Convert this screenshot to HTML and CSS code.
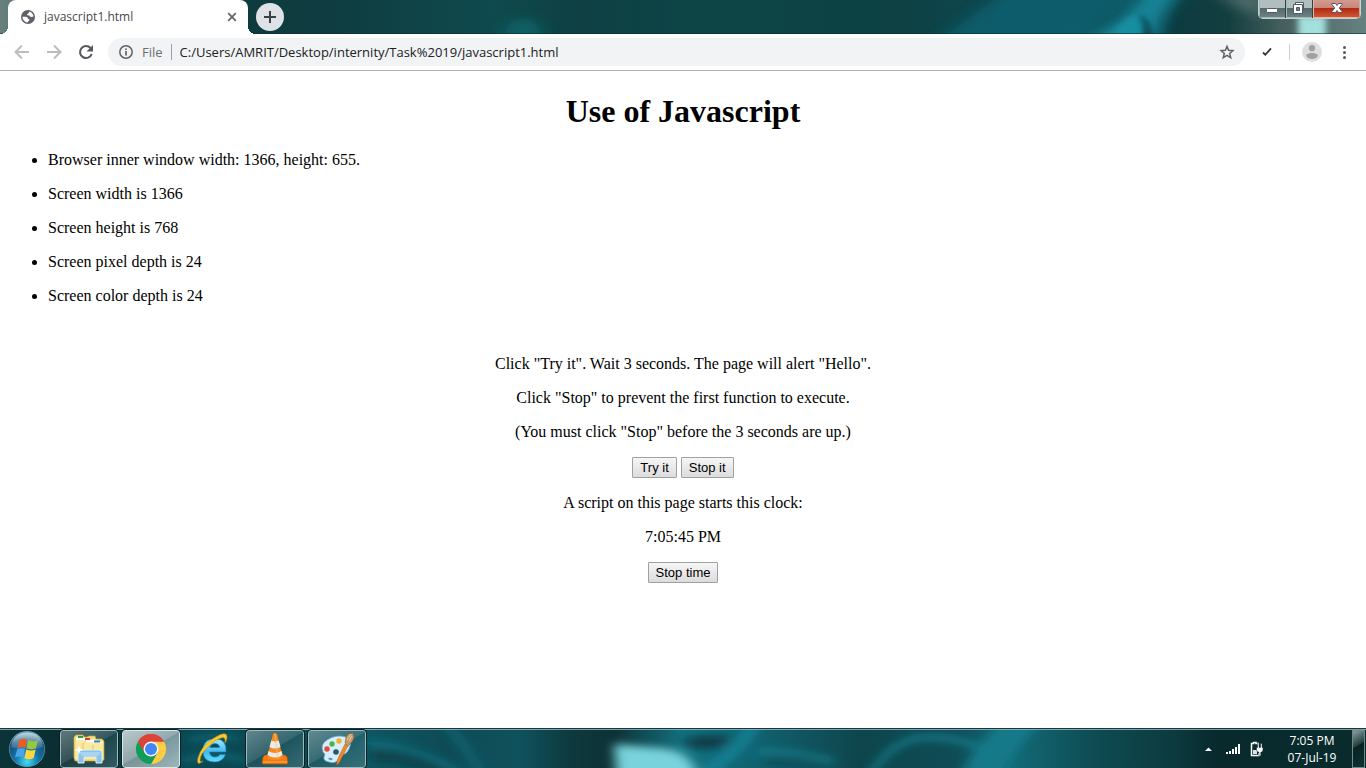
FILE: index.html
```html
<!DOCTYPE html>
<html lang="en">
<head>
<meta charset="utf-8">
<title>javascript1.html</title>
<link rel="stylesheet" href="styles.css">
</head>
<body>
<header class="titlebar">
  <svg class="glass" viewBox="0 0 1366 34" preserveAspectRatio="none" aria-hidden="true">
    <defs>
      <linearGradient id="titleBase">
        <stop offset="0" stop-color="#69807e"/><stop offset=".01" stop-color="#5f7977"/><stop offset=".17" stop-color="#0d3b3d"/><stop offset=".24" stop-color="#0e3c40"/><stop offset=".36" stop-color="#0f4a4e"/><stop offset=".42" stop-color="#0e4044"/><stop offset=".52" stop-color="#0d4547"/><stop offset=".66" stop-color="#0d4144"/><stop offset=".78" stop-color="#0f4c57"/><stop offset=".86" stop-color="#0c3a3f"/><stop offset=".9" stop-color="#143f41"/><stop offset=".94" stop-color="#47605f"/><stop offset="1" stop-color="#668280"/>
      </linearGradient>
      <filter id="soft8" filterUnits="userSpaceOnUse" x="-50" y="-60" width="1466" height="160"><feGaussianBlur stdDeviation="9 5"/></filter>
      <filter id="soft3" filterUnits="userSpaceOnUse" x="-50" y="-60" width="1466" height="160"><feGaussianBlur stdDeviation="3 2"/></filter>
    </defs>
    <rect width="1366" height="34" fill="url(#titleBase)"/>
    <ellipse cx="523" cy="36" rx="18" ry="18" fill="#0f6266" filter="url(#soft8)"/>
    <path d="M925 50L1010 -12H1150L1070 50z" fill="#116070" filter="url(#soft8)" opacity=".85"/>
    <path d="M1060 50Q1125 25 1145 -12H1185Q1160 14 1155 50z" fill="#138396" filter="url(#soft8)"/>
    <path d="M1105 44Q1125 14 1140 14L1142 44z" fill="#1593a5" filter="url(#soft3)" opacity=".7"/>
    <path d="M1138 14Q1153 20 1152 44L1143 44Q1148 24 1138 14z" fill="#0b3d47" filter="url(#soft3)"/>
    <path d="M1215 -8H1262V16Q1240 12 1215 -8z" fill="#5e7777" filter="url(#soft8)" opacity=".7"/>
    <rect x="1298" y="17" width="28" height="30" fill="#a3dfdc" filter="url(#soft3)"/>
    <rect y="33" width="1366" height="1" fill="#0a3035" opacity=".6"/>
  </svg>
  <div class="tab">
    <svg class="icon16" viewBox="0 0 16 16" aria-hidden="true"><circle cx="8" cy="8" r="7" fill="#5f6368"/><path d="M2.500 7.800H5.500C7.500 7.800 8 9 7.900 10 9.400 9.900 9.600 10.500 9.300 11.300L7.300 13.400C4.600 13.100 2.500 10.800 2.500 7.800zM9.500 2.600C11.700 3.200 13.400 5.400 13.500 7.600L11.500 8 9.800 7.600 9.400 6.500 7.500 6.300 7 5.300 8.300 4.600z" fill="#fff"/></svg>
    <span class="tab-title">javascript1.html</span>
    <button class="plain icon16" aria-label="Close tab"><svg viewBox="0 0 16 16"><path d="M4.200 4.200l7.600 7.600M11.800 4.200l-7.600 7.600" stroke="#5f6368" stroke-width="1.700"/></svg></button>
  </div>
  <button class="new-tab" aria-label="New tab"><svg viewBox="0 0 28 28"><path d="M14 8v12M8 14h12" stroke="#3c4043" stroke-width="2"/></svg></button>
  <div class="window-controls">
    <button class="win" aria-label="Minimize"><svg viewBox="0 0 26 18"><rect x="7.500" y="8.500" width="11" height="4" rx="1" fill="#fff" stroke="#535666"/></svg></button>
    <button class="win" aria-label="Restore"><svg viewBox="0 0 26 18"><path d="M9.500 2.500h8v8h-8z" fill="#fff" stroke="#535666"/><path d="M7.500 4.500h9v9h-9z" fill="#fff" stroke="#535666"/><path d="M10.500 7.500h3v3h-3z" fill="#718283" stroke="#535666"/></svg></button>
    <button class="win win-close" aria-label="Close window"><svg viewBox="0 0 46 18"><path d="M18.500 3.500h3.500l1.500 2 1.500-2h3.500v1l-2.700 3.500 2.700 3.500v1h-3.500l-1.500-2-1.500 2h-3.500v-1l2.700-3.500-2.700-3.500z" fill="#fff" stroke="#535666"/></svg></button>
  </div>
</header>

<nav class="toolbar" aria-label="Navigation">
  <button class="plain icon20" aria-label="Back"><svg viewBox="0 0 20 20"><path d="M17 10H4M10 3.500L3.500 10l6.500 6.500" fill="none" stroke="#babcbe" stroke-width="1.900"/></svg></button>
  <button class="plain icon20" aria-label="Forward"><svg viewBox="0 0 20 20"><path d="M3 10h13M10 3.500l6.500 6.500-6.500 6.500" fill="none" stroke="#babcbe" stroke-width="1.900"/></svg></button>
  <button class="plain icon20" aria-label="Reload"><svg viewBox="0 0 20 20"><path d="M15.700 12A6 6 0 1 1 14.500 6" fill="none" stroke="#55595e" stroke-width="2.100"/><path d="M17 3v6.500h-6.500z" fill="#55595e"/></svg></button>
  <div class="omnibox">
    <button class="plain icon16" aria-label="Page information"><svg viewBox="0 0 16 16"><circle cx="8" cy="8" r="6.200" fill="none" stroke="#5f6368" stroke-width="1.500"/><path d="M8 7v4.500M8 4.500v1.600" stroke="#5f6368" stroke-width="1.700"/></svg></button>
    <label class="scheme" for="address">File</label>
    <input class="address" id="address" type="text" value="C:/Users/AMRIT/Desktop/internity/Task%2019/javascript1.html">
    <button class="plain icon16" aria-label="Bookmark this page"><svg viewBox="0 0 16 16"><path d="M8 2.400l1.600 3.900 4.300.4-3.200 2.800 1 4.100L8 11.400l-3.700 2.200 1-4.100L2.100 6.700l4.300-.4z" fill="none" stroke="#5f6368" stroke-width="1.500"/></svg></button>
  </div>
  <button class="plain icon20" aria-label="Extension"><svg viewBox="0 0 20 20"><path d="M6 10.500l2.300 2.300L14 6.300" fill="none" stroke="#333" stroke-width="1.800"/></svg></button>
  <span class="divider"></span>
  <button class="plain icon20" aria-label="Profile"><svg viewBox="0 0 20 20"><circle cx="10" cy="10" r="10" fill="#dedede"/><circle cx="10" cy="6.200" r="3.100" fill="#a0a0a0"/><path d="M4 13.800Q5 11 10 11t6 2.800Q14 17 10 17t-6-3.200z" fill="#a0a0a0"/></svg></button>
  <button class="plain icon20" aria-label="Menu"><svg viewBox="0 0 20 20" fill="#55595e"><circle cx="10.500" cy="5.500" r="1.500"/><circle cx="10.500" cy="10.500" r="1.500"/><circle cx="10.500" cy="15.500" r="1.500"/></svg></button>
</nav>

<main class="page">
  <h1>Use of Javascript</h1>
  <ul class="facts">
    <li>Browser inner window width: 1366, height: 655.</li>
    <li>Screen width is 1366</li>
    <li>Screen height is 768</li>
    <li>Screen pixel depth is 24</li>
    <li>Screen color depth is 24</li>
  </ul>
  <section class="demo">
    <p>Click "Try it". Wait 3 seconds. The page will alert "Hello".</p>
    <p>Click "Stop" to prevent the first function to execute.</p>
    <p>(You must click "Stop" before the 3 seconds are up.)</p>
    <div class="actions"><button class="push">Try it</button><button class="push">Stop it</button></div>
    <p>A script on this page starts this clock:</p>
    <p>7:05:45 PM</p>
    <div class="actions"><button class="push">Stop time</button></div>
  </section>
</main>

<footer class="taskbar">
  <svg class="glass" viewBox="0 0 1366 40" preserveAspectRatio="none" aria-hidden="true">
    <defs>
      <linearGradient id="barBase">
        <stop offset="0" stop-color="#0a3438"/><stop offset=".04" stop-color="#0a2e32"/><stop offset=".13" stop-color="#0b454f"/><stop offset=".2" stop-color="#0c4650"/><stop offset=".27" stop-color="#0e5661"/><stop offset=".33" stop-color="#0f4a54"/><stop offset=".38" stop-color="#0f525d"/><stop offset=".42" stop-color="#0d383c"/><stop offset=".45" stop-color="#0d3236"/><stop offset=".5" stop-color="#137180"/><stop offset=".55" stop-color="#116372"/><stop offset=".63" stop-color="#0e454c"/><stop offset=".7" stop-color="#0f4c56"/><stop offset=".74" stop-color="#126b78"/><stop offset=".8" stop-color="#0e4c53"/><stop offset=".86" stop-color="#0c3a3e"/><stop offset=".89" stop-color="#082a2d"/><stop offset="1" stop-color="#092b2c"/>
      </linearGradient>
      <filter id="blurA" filterUnits="userSpaceOnUse" x="-50" y="-60" width="1466" height="180"><feGaussianBlur stdDeviation="6 4"/></filter>
    </defs>
    <rect width="1366" height="40" fill="url(#barBase)"/>
    <g filter="url(#blurA)" fill="none">
      <path d="M366 14Q440 24 480 60" stroke="#117180" stroke-width="6"/>
      <path d="M440 -10Q470 20 488 60" stroke="#10606d" stroke-width="10"/>
      <path d="M372 28Q410 22 450 50" stroke="#0b3c44" stroke-width="9"/>
      <path d="M614 16L660 20Q696 22 700 60H618z" fill="#78d3dc"/>
      <path d="M684 12Q705 6 735 10L718 19Q700 22 684 17z" fill="#0b353f"/>
      <path d="M705 44Q735 28 755 -5" stroke="#158497" stroke-width="10"/>
      <path d="M756 24Q790 22 835 34" stroke="#12808e" stroke-width="5"/>
      <path d="M765 32H810" stroke="#0b4650" stroke-width="6"/>
      <path d="M864 60Q888 8 930 9T990 28" stroke="#128595" stroke-width="5"/>
      <path d="M954 60Q975 15 1005 -8L1045 -8Q1010 20 998 60z" fill="#137989"/>
      <path d="M188 12Q220 5 240 12M180 34Q210 22 246 32" stroke="#106371" stroke-width="7"/>
    </g>
    <rect width="1366" height="1" fill="#17363e"/>
    <rect y="1" width="1366" height="1" fill="#a1c5c8" opacity=".75"/>
  </svg>
  <button class="plain start" aria-label="Start"><svg viewBox="0 0 38 38">
    <defs><radialGradient id="orb" cx=".5" cy=".85" r=".8"><stop offset="0" stop-color="#47ddf5"/><stop offset=".4" stop-color="#1276aa"/><stop offset=".8" stop-color="#164d78"/><stop offset="1" stop-color="#6196b0"/></radialGradient><linearGradient id="gloss" x2="0" y2="1"><stop stop-color="#cce4ea" stop-opacity=".8"/><stop offset="1" stop-color="#cce4ea" stop-opacity=".1"/></linearGradient></defs>
    <circle cx="19" cy="19" r="18" fill="url(#orb)" stroke="#79aab9"/><circle cx="19" cy="19" r="18.500" fill="none" stroke="#082e3b" stroke-width="1"/>
    <path d="M3 17Q5 3 19 2.500T35 17Q18 22 3 17z" fill="url(#gloss)"/>
    <path d="M11.500 10Q15 7.500 19 9.700L17.300 18Q13.500 16 9.500 18z" fill="#ed5b24"/><path d="M20.200 10Q24.500 12.500 30 10L28 18.300Q23.500 20.500 18.600 18.300z" fill="#93c83f"/><path d="M9.200 19.200Q13 17.300 17 19.300L15.200 27.500Q11.500 25.300 7 27.500z" fill="#4ba4e8"/><path d="M18.300 19.500Q23 21.500 27.700 19.500L25.700 28Q21 30.400 16.400 28z" fill="#ffd43c"/>
  </svg></button>
  <div class="apps">
    <button class="app app-open" aria-label="Windows Explorer"><svg viewBox="0 0 36 36">
      <path d="M3 6l2-2h7l1 2h3l2-1h6l1 3h6l2 2v19l-3 1H4l-1-3z" fill="#f6dc80" stroke="#c9a441" stroke-width=".7"/>
      <path d="M5 6.500h9v3H5zM15 8.500h9v3h-9zM22 11h10v3H22z" fill="#fff"/><path d="M7 5h5v2H7z" fill="#28a13c"/><path d="M14 7h5v2h-5z" fill="#d33b2b"/><path d="M23 9.500h6v2h-6z" fill="#2783dc"/>
      <path d="M5 10q8-1 11 2h16v16H4z" fill="#fbe99e"/><path d="M12 12v8M22 14v7" stroke="#e3c365"/>
      <path d="M7 32V22q0-3 3-3h18q3 0 3 3v10h-6v-6H13v6z" fill="#8bc3e6" stroke="#d7effd"/><path d="M9 22h20M10 24h18" stroke="#c6e6f7"/><path d="M8 14l1 4 4 1-4 1-1 4-1-4-4-1 4-1z" fill="#fff"/>
    </svg></button>
    <button class="app app-open app-active" aria-label="Google Chrome"><svg viewBox="0 0 36 36">
      <path d="M18 18L5 10.500A15 15 0 0 1 31 10.500z" fill="#db4437"/><path d="M31 10.500A15 15 0 0 1 18 33L24.500 21.700 18 10.500z" fill="#ffcd41"/><path d="M5 10.500A15 15 0 0 0 18 33L24.500 21.700 18 18z" fill="#0f9d58"/><path d="M18 10.500H31A15 15 0 0 0 5 10.500L11.500 21.800z" fill="#db4437"/><circle cx="18" cy="18" r="7.500" fill="#f4f4f4"/><circle cx="18" cy="18" r="6" fill="#4285f4"/>
    </svg></button>
    <button class="app" aria-label="Internet Explorer"><svg viewBox="0 0 36 36">
      <defs><linearGradient id="ie" x2="0" y2="1"><stop stop-color="#a5edff"/><stop offset=".55" stop-color="#3eb9ef"/><stop offset="1" stop-color="#65ddff"/></linearGradient></defs>
      <path d="M31 21H14.500q.5 5 5.500 5 3.500 0 5-2.500h5.500Q27.500 31 20 31 8 31 8 19.500T20 8Q32 8 31 21zM14.700 16.500h10Q24 12.500 20 12.500t-5.300 4z" fill="url(#ie)" stroke="#2180b5" stroke-width=".6"/>
      <path d="M8 30Q1 36 3 27 6 15 19 7 32-1 32 6q0 3-2 6 1-7-4-5-5 1-12 8Q5 23 5 29q0 3 3 1z" fill="#fbc928" stroke="#c88b16" stroke-width=".6"/>
    </svg></button>
    <button class="app app-open" aria-label="VLC media player"><svg viewBox="0 0 36 36">
      <path d="M8 24h20l2 2 1 6-1 1H6l-1-1 1-6z" fill="#f47b13" stroke="#b65408" stroke-width=".7"/><path d="M6 31h24" stroke="#ffad54"/>
      <path d="M16 3q2-2 4 0l6 24q-8 4-16 0z" fill="#f88a19"/><path d="M14.300 9.500q3.700 2 7.400 0l1.800 6.500q-5.500 3-11 0zM11.400 20q6.600 4 13.200 0l1 4q-7.500 5-15.200 0z" fill="#e7ebeb"/><path d="M18 3l3 25" stroke="#ffc079" stroke-width="1.500" opacity=".5"/>
    </svg></button>
    <button class="app app-open" aria-label="Paint"><svg viewBox="0 0 36 36">
      <path d="M8 9Q17 3 27 6q7 4 3 12-2 5-7 6-3 1-4 5-3 4-9 2-6-1-5-5 2-3-1-5Q1 13 8 9z" fill="#d8eef8" stroke="#6ba6cb" stroke-width=".8"/><circle cx="17" cy="21" r="2.800" fill="#24586c"/><circle cx="8" cy="18" r="2.700" fill="#e3473f"/><circle cx="13" cy="13" r="2.700" fill="#4fb251"/><circle cx="20" cy="10" r="2.700" fill="#f4ae31"/><path d="M9 27q3-1 5 1-3 3-5-1z" fill="#4b9add"/>
      <path d="M26 13l3 2-7 13q-2 5-4 6-1-3 2-9z" fill="#ee8a2b" stroke="#b95a17" stroke-width=".5"/><path d="M26 12l1-6 2-3 5-1 1 5-2 4-4 4z" fill="#c39768" stroke="#79553b" stroke-width=".5"/><path d="M28 9l4-6M30 10l3-5" stroke="#ead0a3"/>
    </svg></button>
  </div>
  <div class="tray">
    <button class="plain icon16" aria-label="Show hidden icons"><svg viewBox="0 0 16 16"><path d="M4 10L7.500 6.500 11 10z" fill="#f4f4ff"/></svg></button>
    <svg class="icon16" viewBox="0 0 16 16" role="img" aria-label="Signal strength"><path d="M1 11h2v2H1zM4 10h2v3H4zM7 8h2v5H7zM10 6h2v7h-2zM13 3h2v10h-2z" fill="#fff"/></svg>
    <svg class="icon16" viewBox="0 0 16 16" role="img" aria-label="Battery charging"><path d="M9 3.500V2.500H7V1.500H4.500v1H2.500v12H10V12" fill="none" stroke="#fff" stroke-width="1.500"/><path d="M4 9h4v4H4z" fill="#dce4e4"/><path d="M8.500 1.500v5h-1V9q0 2 2.500 2.300V15h1.800v-3.700Q14 11 14 9V6.500h-1v-4h-1.500v4H10v-5z" fill="#fff" stroke="#12292b" stroke-width=".5"/></svg>
  </div>
  <div class="clock"><time>7:05 PM</time><time>07-Jul-19</time></div>
  <button class="show-desktop" aria-label="Show desktop"></button>
</footer>
</body>
</html>
```

FILE: styles.css
```css
* { box-sizing: border-box; }

body {
  display: flex;
  flex-direction: column;
  min-height: 100vh;
  margin: 0;
  background: #fff;
  color: #000;
  font: 16px/18px "Liberation Serif", "Times New Roman", serif;
}

svg { display: block; }
button { margin: 0; padding: 0; }
button svg { width: 100%; height: 100%; }

.plain { border: 0; background: none; flex: none; }
.icon16 { width: 16px; height: 16px; flex: none; }
.icon20 { width: 20px; height: 20px; }

/* wallpaper seen through the window frame */
.glass {
  position: absolute;
  inset: 0;
  width: 100%;
  height: 100%;
  z-index: -1;
}

.titlebar {
  position: relative;
  z-index: 0;
  display: flex;
  gap: 8px;
  height: 34px;
  padding: 0 5px 0 8px;
}

.tab {
  position: relative;
  display: flex;
  align-items: center;
  gap: 8px;
  width: 240px;
  padding: 0 8px 0 12px;
  border-radius: 8px 8px 0 0;
  background: #fff;
  color: #45494d;
  font: 12px/16px "Open Sans", "Noto Sans", sans-serif;
}
.tab::before,
.tab::after {
  content: "";
  position: absolute;
  bottom: 0;
  width: 8px;
  height: 8px;
}
.tab::before { right: 100%; background: radial-gradient(circle at 0 0, transparent 8px, #fff 8px); }
.tab::after { left: 100%; background: radial-gradient(circle at 100% 0, transparent 8px, #fff 8px); }
.tab-title { flex: 1; }

.new-tab {
  width: 28px;
  height: 28px;
  margin-top: 3px;
  border: 0;
  border-radius: 50%;
  background: #dee1e6;
}

.window-controls {
  display: flex;
  height: 19px;
  margin-left: auto;
  border: 1px solid #c3d3d3;
  border-top: 0;
  border-radius: 0 0 5px 5px;
  background: #25383b;
  overflow: hidden;
}
.win {
  width: 27px;
  border: 0;
  border-right: 1px solid #2d4244;
  box-shadow: inset 1px -1px 0 #a5b7b7;
  background: linear-gradient(#b0bebd 0 45%, #536a6b 46%, #6f8586);
}
.win-close {
  width: 47px;
  border-right: 0;
  box-shadow: inset 1px -1px 0 #e7b3a5, inset -1px 0 0 #d1a69c;
  background: linear-gradient(#d29b90 0, #c98577 45%, #ad2b12 46%, #d65a37);
}

.toolbar {
  display: flex;
  align-items: center;
  gap: 12px;
  height: 37px;
  padding: 0 12px;
  border-bottom: 1px solid #b3b3b3;
}
.omnibox {
  display: flex;
  align-items: center;
  flex: 1;
  gap: 8px;
  height: 28px;
  padding: 0 10px;
  border-radius: 14px;
  background: #f1f3f4;
  color: #202124;
  font: 13px/20px "Open Sans", "Noto Sans", sans-serif;
}
.scheme {
  padding-right: 8px;
  border-right: 1px solid #9aa0a6;
  color: #6b6f74;
  line-height: 16px;
}
.address {
  flex: 1;
  min-width: 0;
  padding: 0;
  border: 0;
  outline: 0;
  background: none;
  color: inherit;
  font: inherit;
}
.divider { width: 1px; height: 16px; background: #cfcfcf; }

.page { flex: 1; padding: 0 8px; }
h1 {
  margin: 22px 0 21px;
  font-size: 32px;
  line-height: 37px;
  text-align: center;
}
.facts {
  display: flex;
  flex-direction: column;
  gap: 16px;
  margin: 0;
  padding-left: 40px;
}
.demo {
  display: flex;
  flex-direction: column;
  gap: 16px;
  margin-top: 50px;
  text-align: center;
}
.demo p { margin: 0; }
.actions { display: flex; justify-content: center; gap: 4px; }
.push {
  height: 21px;
  padding: 0 7px;
  border: 1px solid #a0a0a0;
  border-radius: 1px;
  background: linear-gradient(#f6f6f6, #dcdcdc);
  color: #000;
  font: 13px/19px "Liberation Sans", Arial, sans-serif;
}

.taskbar {
  position: relative;
  z-index: 0;
  display: flex;
  align-items: center;
  height: 40px;
  padding: 1px 1px 0 8px;
  color: #fff;
}
.start { width: 38px; height: 38px; }
.apps { display: flex; flex: 1; gap: 4px; margin-left: 14px; }
.app {
  display: grid;
  place-items: center;
  width: 58px;
  height: 38px;
  border: 1px solid transparent;
  border-radius: 3px;
  background: none;
}
.app svg { width: 36px; height: 36px; }
.app-open {
  border-color: #9fb8bb;
  outline: 1px solid #062327;
  background: linear-gradient(150deg, #ffffff59 0, #ffffff2b 48%, #ffffff12 50%, #ffffff2b);
}
.app-active {
  border-color: #dce8e8;
  background: linear-gradient(150deg, #ffffffb8 0, #ffffff8c 48%, #ffffff73 50%, #ffffff99);
}
.tray { display: flex; gap: 8px; padding-right: 7px; }
.clock {
  display: flex;
  flex-direction: column;
  width: 80px;
  font: 12px/17px "Open Sans", "Noto Sans", sans-serif;
  text-align: center;
}
.show-desktop {
  width: 13px;
  height: 38px;
  border: 1px solid #6f8989;
  background: linear-gradient(150deg, #8c9d9d, #233f40 40%, #082223 42%, #0d3233);
}
```
